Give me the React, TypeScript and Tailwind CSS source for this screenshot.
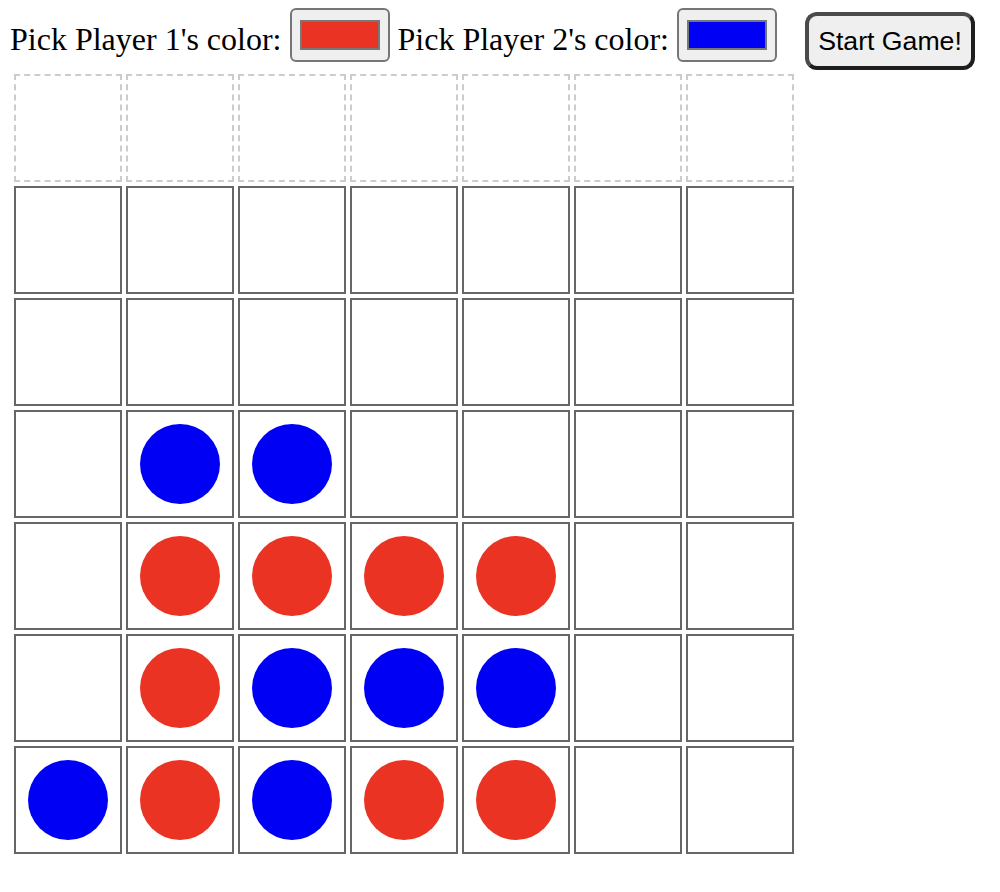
import React from "react";

const R = "#ea3323";
const B = "#0000f5";

// rows of the board below the drop row; null = empty
const board: (string | null)[][] = [
  [null, null, null, null, null, null, null],
  [null, null, null, null, null, null, null],
  [null, B, B, null, null, null, null],
  [null, R, R, R, R, null, null],
  [null, R, B, B, B, null, null],
  [B, R, B, R, R, null, null],
];

function Swatch({ color }: { color: string }) {
  return (
    <div className="w-[100px] h-[54px] mt-[8px] shrink-0 rounded-[6px] border-2 border-[#767676] bg-[#efefef] flex items-center justify-center">
      <div className="w-[80px] h-[30px] border-2 border-[#777777]" style={{ backgroundColor: color }} />
    </div>
  );
}

export default function App() {
  const serif = { fontFamily: '"Liberation Serif", "Times New Roman", serif' };
  return (
    <div className="w-[1000px] h-[892px] bg-white text-black">
      <div className="flex items-start h-[70px] pl-[10px]">
        <span className="mt-[21px] text-[32px] leading-[36px] whitespace-nowrap" style={serif}>
          Pick Player 1's color:
        </span>
        <div className="ml-[8px]">
          <Swatch color={R} />
        </div>
        <span className="ml-[8px] mt-[21px] text-[32px] leading-[36px] whitespace-nowrap" style={serif}>
          Pick Player 2's color:
        </span>
        <div className="ml-[8px]">
          <Swatch color={B} />
        </div>
        <button
          className="ml-[28px] mt-[12px] w-[170px] h-[58px] shrink-0 rounded-[12px] border-[4px] border-t-[#4a4a4a] border-l-[#4a4a4a] border-r-[#1e1e1e] border-b-[#1e1e1e] bg-[#efefef] text-[26.67px] leading-none text-black flex items-center justify-center"
          style={{ fontFamily: '"Liberation Sans", Arial, sans-serif' }}
        >
          Start Game!
        </button>
      </div>
      <div className="ml-[14px] mt-[4px] flex flex-col gap-[4px]">
        <div className="flex gap-[4px]">
          {Array.from({ length: 7 }).map((_, i) => (
            <div key={i} className="w-[108px] h-[108px] border-2 border-dashed border-[#cccccc]" />
          ))}
        </div>
        {board.map((row, r) => (
          <div key={r} className="flex gap-[4px]">
            {row.map((c, i) => (
              <div key={i} className="w-[108px] h-[108px] border-2 border-[#666666] flex items-center justify-center">
                {c && <div className="w-[80px] h-[80px] rounded-full" style={{ backgroundColor: c }} />}
              </div>
            ))}
          </div>
        ))}
      </div>
    </div>
  );
}
